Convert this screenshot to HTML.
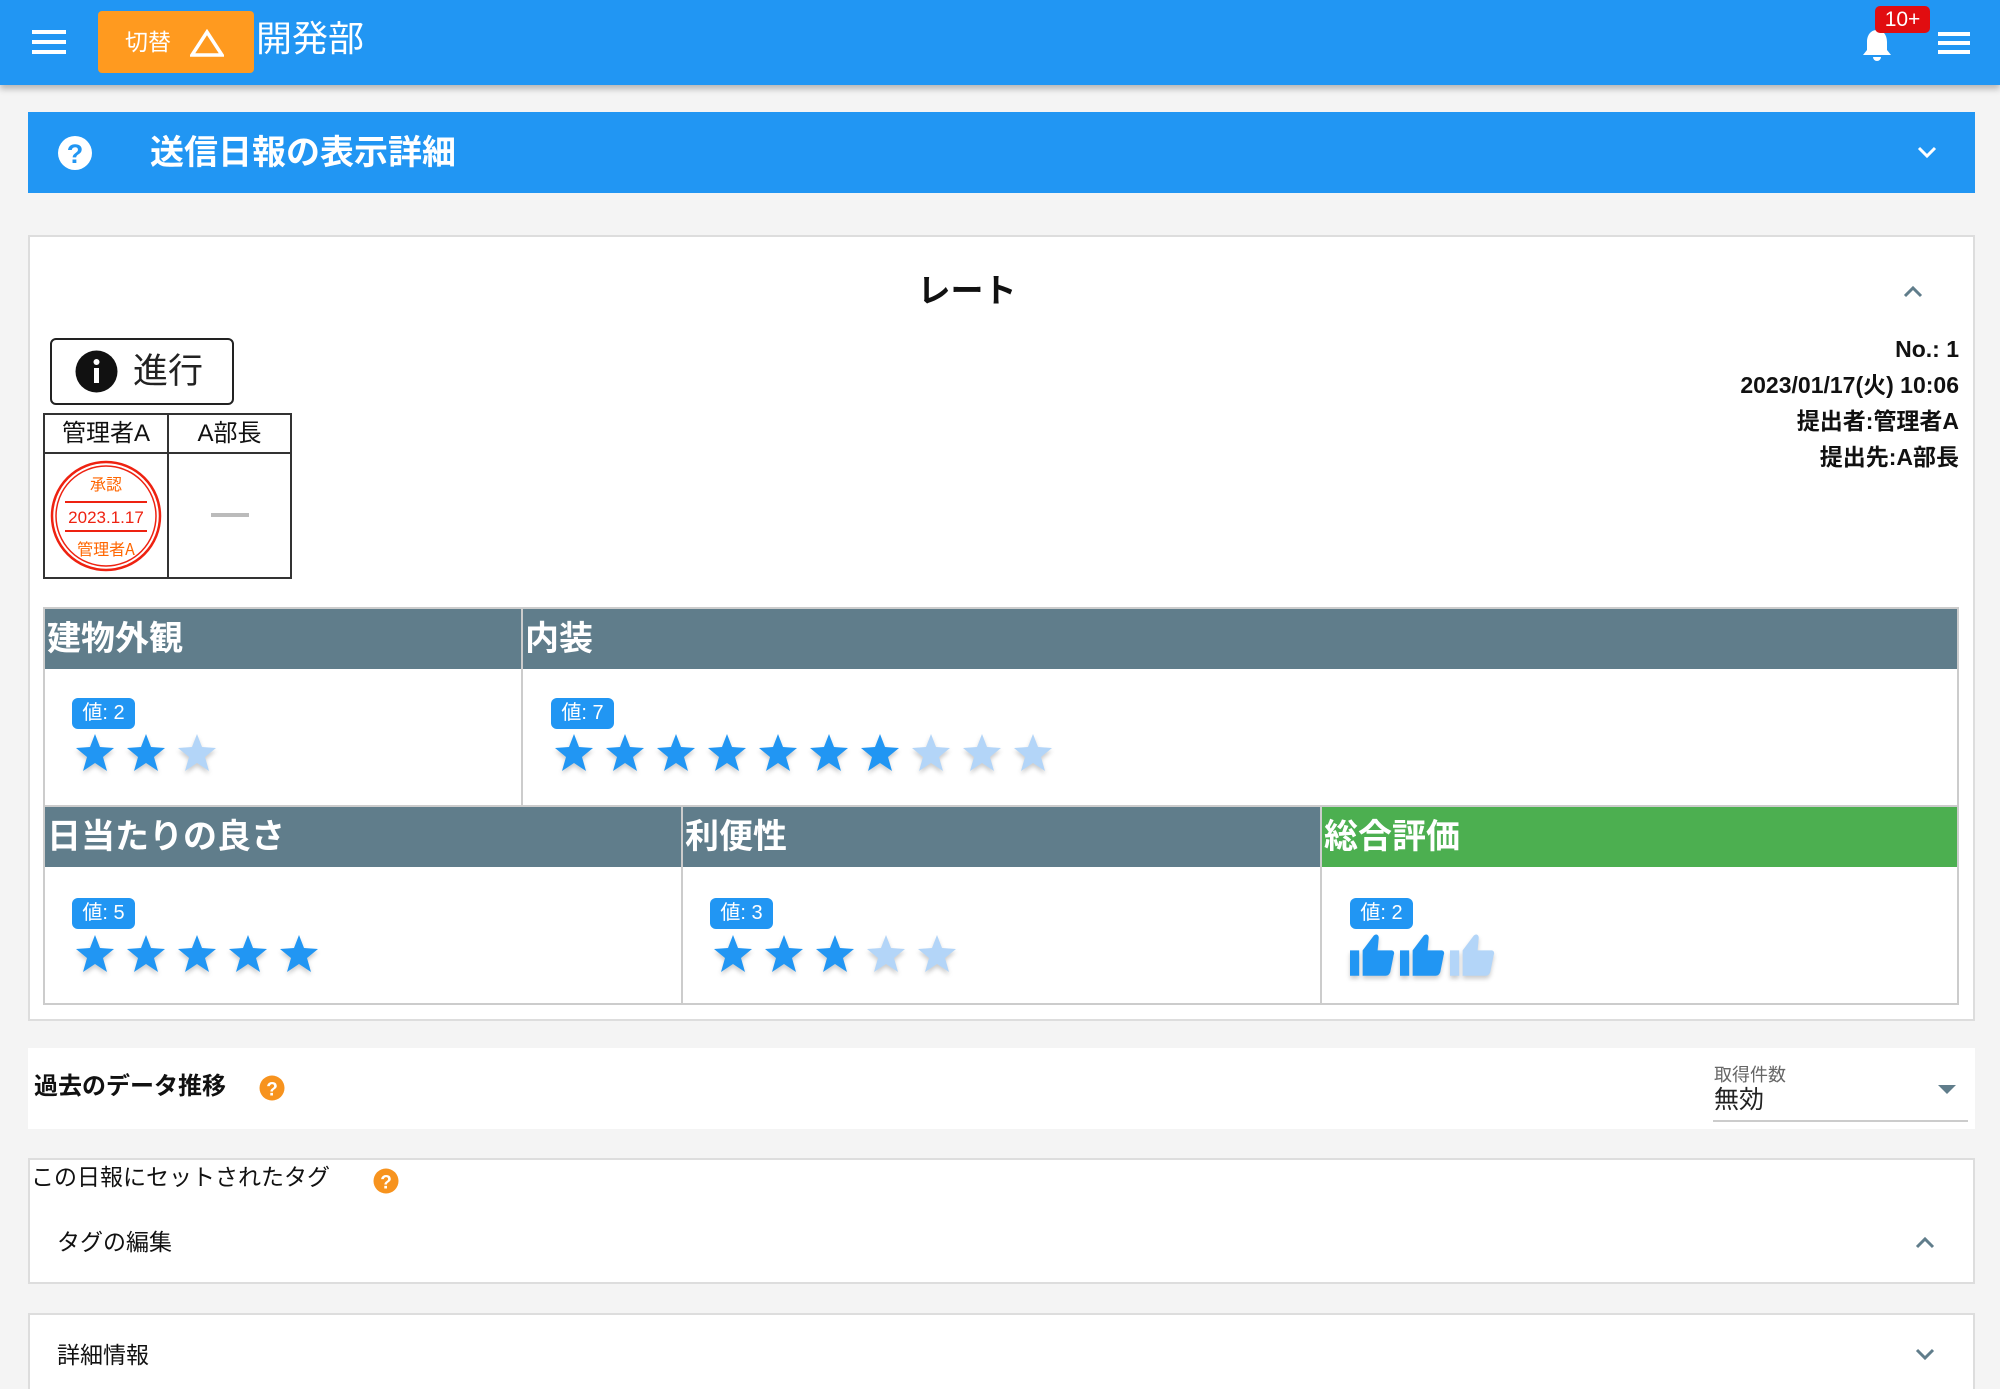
<!DOCTYPE html>
<html><head><meta charset="utf-8"><style>
*{box-sizing:border-box;margin:0;padding:0}
html,body{width:2000px;height:1389px;overflow:hidden}
body{background:#f4f4f4;font-family:"Liberation Sans","Noto Sans CJK JP",sans-serif;position:relative;color:#111}
.abs{position:absolute}
.hdr{left:0;top:0;width:2000px;height:85px;background:#2196f3;box-shadow:0 4px 6px rgba(0,0,0,.25)}
.card{background:#fff;border:2px solid #ddd}
.gh{background:#607d8b;color:#fff;font-weight:bold;font-size:34px;line-height:60px;padding-left:2px;position:absolute}
.cell{position:absolute;border:2px solid #ccc;background:#fff}
.badge{position:absolute;background:#2196f3;color:#fff;border-radius:6px;font-size:20px;line-height:31px;width:63px;text-align:center}
.stars{position:absolute;display:flex;gap:11px}
.stars svg{width:40px;height:40px;filter:drop-shadow(0 3px 2px rgba(0,0,0,.2))}
</style></head><body>
<div class="abs hdr"></div>
<svg class="abs" style="left:32px;top:30px" width="34" height="24"><rect y="0" width="34" height="4" fill="#fff"/><rect y="10" width="34" height="4" fill="#fff"/><rect y="20" width="34" height="4" fill="#fff"/></svg>
<div class="abs" style="left:98px;top:11px;width:156px;height:62px;background:#ff9a1f;border-radius:4px;color:#fff;font-size:23px;line-height:62px;padding-left:27px">切替
<svg style="position:absolute;left:92px;top:18px" width="34" height="28"><path d="M17 3 L32 26 L2 26 Z" fill="none" stroke="#fff" stroke-width="3.5"/></svg></div>
<div class="abs" style="left:256px;top:14px;color:#fff;font-size:36px;line-height:50px">開発部</div>
<svg class="abs" style="left:1862px;top:28px" width="30" height="33"><path d="M15 2 C8 2 5 8 5 14 L5 22 L1 27 L29 27 L25 22 L25 14 C25 8 22 2 15 2Z M11 29 A4 4 0 0 0 19 29Z" fill="#fff"/></svg>
<div class="abs" style="left:1875px;top:6px;width:55px;height:27px;background:#e10d10;border-radius:5px;color:#fff;font-size:21px;line-height:27px;text-align:center">10+</div>
<svg class="abs" style="left:1938px;top:32px" width="32" height="22"><rect width="32" height="4" fill="#fff"/><rect y="9" width="32" height="4" fill="#fff"/><rect y="18" width="32" height="4" fill="#fff"/></svg>

<div class="abs" style="left:28px;top:112px;width:1947px;height:81px;background:#2196f3"></div>
<svg class="abs" style="left:57px;top:135px" width="36" height="36"><circle cx="18" cy="18" r="17" fill="#fff"/><text x="18" y="28" text-anchor="middle" font-size="27" font-weight="bold" fill="#2196f3" font-family="Liberation Sans">?</text></svg>
<div class="abs" style="left:150px;top:130px;color:#fff;font-size:34px;font-weight:bold;line-height:46px">送信日報の表示詳細</div>
<svg class="abs" style="left:1916px;top:145px" width="22" height="16"><path d="M3 3 L11 11 L19 3" fill="none" stroke="#fff" stroke-width="3"/></svg>

<div class="abs card" style="left:28px;top:235px;width:1947px;height:786px"></div>
<div class="abs" style="left:0;width:1934px;top:268px;text-align:center;font-size:33px;font-weight:bold;line-height:46px">レート</div>
<svg class="abs" style="left:1902px;top:283px" width="22" height="16"><path d="M3 13 L11 5 L19 13" fill="none" stroke="#607d8b" stroke-width="3"/></svg>
<div class="abs" style="left:50px;top:338px;width:184px;height:67px;border:2px solid #222;border-radius:6px;background:#fff"></div>
<svg class="abs" style="left:75px;top:350px" width="43" height="43"><circle cx="21.5" cy="21.5" r="21" fill="#111"/><circle cx="21.5" cy="12" r="3" fill="#fff"/><rect x="19" y="18" width="5" height="15" fill="#fff"/></svg>
<div class="abs" style="left:133px;top:350px;font-size:35px;line-height:44px;color:#222">進行</div>
<div class="abs" style="left:43px;top:413px;width:249px;height:166px;border:2px solid #333;background:#fff"></div>
<div class="abs" style="left:167px;top:413px;width:2px;height:166px;background:#333"></div>
<div class="abs" style="left:43px;top:452px;width:249px;height:2px;background:#333"></div>
<div class="abs" style="left:45px;top:417px;width:122px;text-align:center;font-size:24px;line-height:34px">管理者A</div>
<div class="abs" style="left:169px;top:417px;width:121px;text-align:center;font-size:24px;line-height:34px">A部長</div>
<svg class="abs" style="left:50px;top:460px" width="112" height="112"><circle cx="56" cy="56" r="54" fill="none" stroke="#e21" stroke-width="2.5"/><circle cx="56" cy="56" r="50" fill="none" stroke="#e21" stroke-width="1.5"/><line x1="15" y1="42" x2="97" y2="42" stroke="#e21" stroke-width="2"/><line x1="15" y1="71" x2="97" y2="71" stroke="#e21" stroke-width="2"/>
<text x="56" y="30" text-anchor="middle" font-size="16" fill="#f60" font-family="Noto Sans CJK JP">承認</text><text x="56" y="63" text-anchor="middle" font-size="17" fill="#e21" font-family="Liberation Sans">2023.1.17</text><text x="56" y="95" text-anchor="middle" font-size="16" fill="#f60" font-family="Noto Sans CJK JP">管理者A</text></svg>
<div class="abs" style="left:211px;top:513px;width:38px;height:4px;background:#bbb"></div>
<div class="abs" style="right:41px;top:331px;text-align:right;font-size:23px;font-weight:bold;line-height:36px">No.: 1<br>2023/01/17(火) 10:06<br>提出者:管理者A<br>提出先:A部長</div>

<svg width="0" height="0" style="position:absolute"><defs><path id="st" d="M20 1 L25 14 L39 15 L28 24 L32 38 L20 30 L8 38 L12 24 L1 15 L15 14Z"/></defs></svg>

<div class="cell" style="left:43px;top:607px;width:480px;height:200px"></div>
<div class="cell" style="left:521px;top:607px;width:1438px;height:200px"></div>
<div class="cell" style="left:43px;top:805px;width:640px;height:200px"></div>
<div class="cell" style="left:681px;top:805px;width:641px;height:200px"></div>
<div class="cell" style="left:1320px;top:805px;width:639px;height:200px"></div>
<div class="gh" style="left:45px;top:609px;width:476px">建物外観</div>
<div class="gh" style="left:523px;top:609px;width:1434px">内装</div>
<div class="gh" style="left:45px;top:807px;width:636px">日当たりの良さ</div>
<div class="gh" style="left:683px;top:807px;width:637px">利便性</div>
<div class="gh" style="left:1322px;top:807px;width:635px;background:#4caf50">総合評価</div>

<div class="badge" style="left:72px;top:698px">値: 2</div>
<div class="stars" style="left:75px;top:733px"><svg><use href="#st" fill="#2196f3"/></svg><svg><use href="#st" fill="#2196f3"/></svg><svg><use href="#st" fill="#b3d5f8"/></svg></div>
<div class="badge" style="left:551px;top:698px">値: 7</div>
<div class="stars" style="left:554px;top:733px"><svg><use href="#st" fill="#2196f3"/></svg><svg><use href="#st" fill="#2196f3"/></svg><svg><use href="#st" fill="#2196f3"/></svg><svg><use href="#st" fill="#2196f3"/></svg><svg><use href="#st" fill="#2196f3"/></svg><svg><use href="#st" fill="#2196f3"/></svg><svg><use href="#st" fill="#2196f3"/></svg><svg><use href="#st" fill="#b3d5f8"/></svg><svg><use href="#st" fill="#b3d5f8"/></svg><svg><use href="#st" fill="#b3d5f8"/></svg></div>
<div class="badge" style="left:72px;top:898px">値: 5</div>
<div class="stars" style="left:75px;top:934px"><svg><use href="#st" fill="#2196f3"/></svg><svg><use href="#st" fill="#2196f3"/></svg><svg><use href="#st" fill="#2196f3"/></svg><svg><use href="#st" fill="#2196f3"/></svg><svg><use href="#st" fill="#2196f3"/></svg></div>
<div class="badge" style="left:710px;top:898px">値: 3</div>
<div class="stars" style="left:713px;top:934px"><svg><use href="#st" fill="#2196f3"/></svg><svg><use href="#st" fill="#2196f3"/></svg><svg><use href="#st" fill="#2196f3"/></svg><svg><use href="#st" fill="#b3d5f8"/></svg><svg><use href="#st" fill="#b3d5f8"/></svg></div>
<div class="badge" style="left:1350px;top:898px">値: 2</div>
<svg width="0" height="0" style="position:absolute"><defs><path id="th" d="M0 16 H8 V38 H0Z M11 16 L20 4 C22 1 25 2 25 5 L24 16 H36 C38 16 39 18 38 20 L35 35 C34 37 33 38 31 38 H11Z"/></defs></svg>
<div class="stars" style="left:1350px;top:932px;gap:4px"><svg viewBox="0 0 40 40" style="width:46px;height:46px"><use href="#th" fill="#2196f3"/></svg><svg viewBox="0 0 40 40" style="width:46px;height:46px"><use href="#th" fill="#2196f3"/></svg><svg viewBox="0 0 40 40" style="width:46px;height:46px"><use href="#th" fill="#b3d5f8"/></svg></div>

<div class="abs" style="left:28px;top:1048px;width:1947px;height:81px;background:#fff"></div>
<div class="abs" style="left:34px;top:1070px;font-size:24px;font-weight:bold;line-height:34px">過去のデータ推移</div>
<svg class="abs" style="left:259px;top:1075px" width="26" height="26"><circle cx="13" cy="13" r="12.5" fill="#f7931e"/><text x="13" y="20.5" text-anchor="middle" font-size="19" font-weight="bold" fill="#fff" font-family="Liberation Sans">?</text></svg>
<div class="abs" style="left:1714px;top:1063px;font-size:18px;color:#666;line-height:24px">取得件数</div>
<div class="abs" style="left:1714px;top:1084px;font-size:25px;color:#222;line-height:32px">無効</div>
<svg class="abs" style="left:1938px;top:1084px" width="18" height="12"><path d="M0 1 H18 L9 10Z" fill="#607d8b"/></svg>
<div class="abs" style="left:1713px;top:1120px;width:255px;height:2px;background:#ccc"></div>

<div class="abs card" style="left:28px;top:1158px;width:1947px;height:126px"></div>
<div class="abs" style="left:31px;top:1161px;font-size:23px;line-height:32px">この日報にセットされたタグ</div>
<svg class="abs" style="left:373px;top:1168px" width="26" height="26"><circle cx="13" cy="13" r="12.5" fill="#f7931e"/><text x="13" y="20.5" text-anchor="middle" font-size="19" font-weight="bold" fill="#fff" font-family="Liberation Sans">?</text></svg>
<div class="abs" style="left:57px;top:1226px;font-size:23px;line-height:32px">タグの編集</div>
<svg class="abs" style="left:1914px;top:1234px" width="22" height="16"><path d="M3 13 L11 5 L19 13" fill="none" stroke="#607d8b" stroke-width="3"/></svg>

<div class="abs card" style="left:28px;top:1313px;width:1947px;height:76px;border-bottom:none"></div>
<div class="abs" style="left:57px;top:1339px;font-size:23px;line-height:32px">詳細情報</div>
<svg class="abs" style="left:1914px;top:1347px" width="22" height="16"><path d="M3 3 L11 11 L19 3" fill="none" stroke="#607d8b" stroke-width="3"/></svg>
</body></html>
